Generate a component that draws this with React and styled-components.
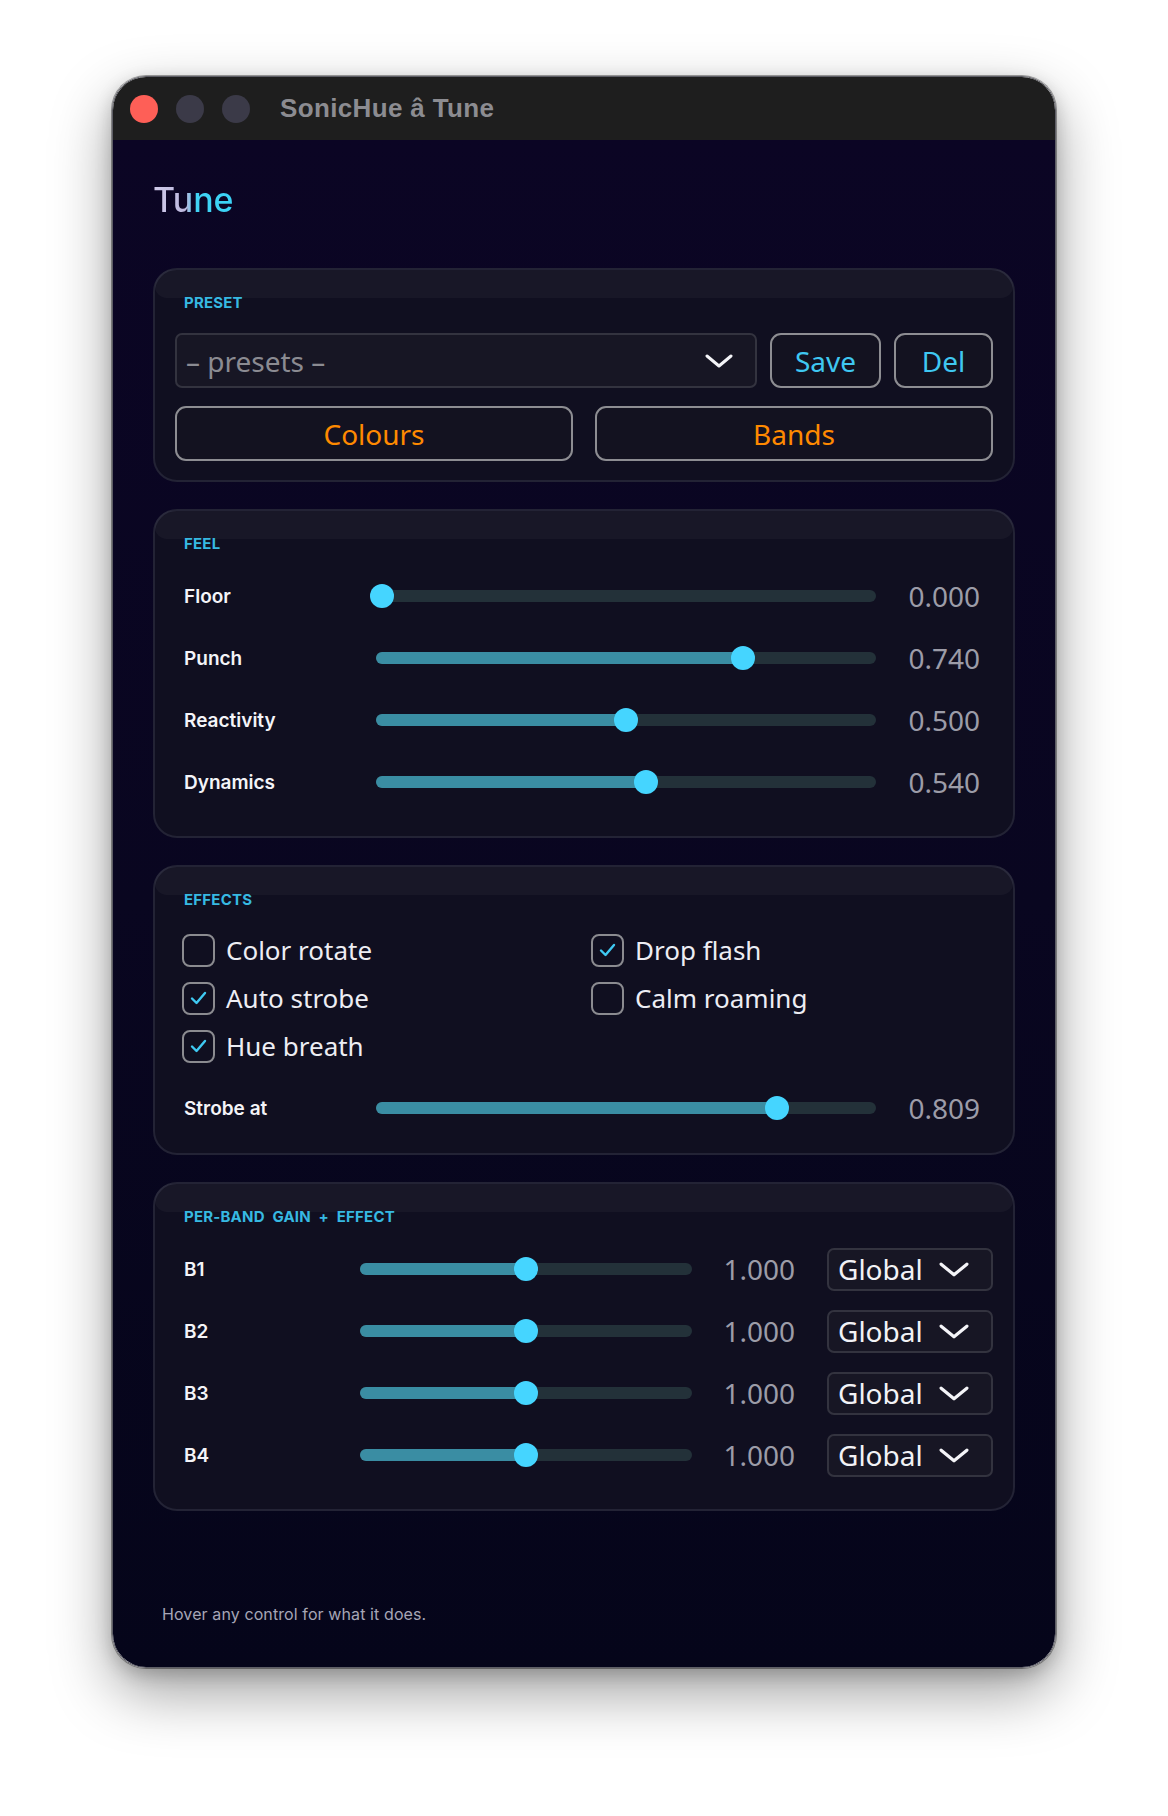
import React from 'react';
import styled, { createGlobalStyle } from 'styled-components';

const GlobalStyle = createGlobalStyle`
  html, body {
    margin: 0;
    padding: 0;
    background: #ffffff;
  }
  * {
    box-sizing: border-box;
  }
`;

const feel = [
  { name: 'Floor', value: 0 },
  { name: 'Punch', value: 0.74 },
  { name: 'Reactivity', value: 0.5 },
  { name: 'Dynamics', value: 0.54 },
];

const effects = [
  { name: 'Color rotate', on: false },
  { name: 'Drop flash', on: true },
  { name: 'Auto strobe', on: true },
  { name: 'Calm roaming', on: false },
  { name: 'Hue breath', on: true },
];

const bands = ['B1', 'B2', 'B3', 'B4'];

const Chevron = ({ w = 28, h = 14 }) => (
  <svg width={w} height={h} viewBox="0 0 28 14" fill="none">
    <polyline points="2,2 14,12 26,2" stroke="#f4f4f8" strokeWidth="3" strokeLinecap="round" strokeLinejoin="round" />
  </svg>
);

const Check = () => (
  <svg width="17" height="14" viewBox="0 0 17 14" fill="none">
    <polyline points="2,7.5 6.5,12 15,2" stroke="#3fc9f2" strokeWidth="2.4" strokeLinecap="round" strokeLinejoin="round" />
  </svg>
);

const Slider = ({ value }) => {
  const pos = `calc(6px + ${value} * (100% - 12px))`;
  return (
    <Track>
      <Fill style={{ width: pos }} />
      <Thumb style={{ left: pos }} />
    </Track>
  );
};

const App = () => {
  return (
    <>
      <GlobalStyle />
      <Page>
        <Window>
          <TitleBar>
            <Light $color="#fe5f57" />
            <Light $color="#3b3a48" />
            <Light $color="#3b3a48" />
            <Title>SonicHue â Tune</Title>
          </TitleBar>
          <Content>
            <Heading>Tune</Heading>

            <Panel>
              <SectionLabel>Preset</SectionLabel>
              <PresetRow>
                <Select $h={55}>
                  <SelectText $muted>– presets –</SelectText>
                  <Chevron />
                </Select>
                <OutlineButton $color="#3fc7f1" $w={111}>Save</OutlineButton>
                <OutlineButton $color="#3fc7f1" $w={99}>Del</OutlineButton>
              </PresetRow>
              <ButtonPair>
                <OutlineButton $color="#ff8a00">Colours</OutlineButton>
                <OutlineButton $color="#ff8a00">Bands</OutlineButton>
              </ButtonPair>
            </Panel>

            <Panel>
              <SectionLabel>Feel</SectionLabel>
              <SliderList $pad={13}>
                {feel.map((f) => (
                  <SliderRow key={f.name}>
                    <RowLabel>{f.name}</RowLabel>
                    <Slider value={f.value} />
                    <Value>{f.value.toFixed(3)}</Value>
                  </SliderRow>
                ))}
              </SliderList>
            </Panel>

            <Panel>
              <SectionLabel>Effects</SectionLabel>
              <CheckGrid>
                {effects.map((e) => (
                  <CheckItem key={e.name}>
                    <Box>{e.on && <Check />}</Box>
                    <CheckText>{e.name}</CheckText>
                  </CheckItem>
                ))}
              </CheckGrid>
              <SliderList $pad={4} $top={20}>
                <SliderRow>
                  <RowLabel>Strobe at</RowLabel>
                  <Slider value={0.809} />
                  <Value>0.809</Value>
                </SliderRow>
              </SliderList>
            </Panel>

            <Panel>
              <SectionLabel>Per-band gain + effect</SectionLabel>
              <SliderList $pad={13}>
                {bands.map((b) => (
                  <BandRow key={b}>
                    <RowLabel>{b}</RowLabel>
                    <Slider value={0.5} />
                    <BandValue>1.000</BandValue>
                    <Select $h={43}>
                      <SelectText>Global</SelectText>
                      <Chevron w={30} h={15} />
                    </Select>
                  </BandRow>
                ))}
              </SliderList>
            </Panel>

            <Footer>Hover any control for what it does.</Footer>
          </Content>
        </Window>
      </Page>
    </>
  );
};

const Page = styled.div`
  width: 1168px;
  height: 1816px;
  padding-top: 76px;
  display: flex;
  justify-content: center;
  align-items: flex-start;
  background: #ffffff;
`;

const Window = styled.div`
  width: 944px;
  height: 1592px;
  border-radius: 34px;
  border: 1px solid #5e5e66;
  overflow: hidden;
  display: flex;
  flex-direction: column;
  box-shadow: 0 0 0 1px rgba(0, 0, 0, 0.35), 0 24px 60px rgba(0, 0, 0, 0.38),
    0 6px 18px rgba(0, 0, 0, 0.2);
`;

const TitleBar = styled.div`
  height: 63px;
  flex: none;
  background: #1e1e1e;
  display: flex;
  align-items: center;
  padding-left: 17px;
  gap: 18px;
`;

const Light = styled.span`
  width: 28px;
  height: 28px;
  border-radius: 50%;
  background: ${(p) => p.$color};
`;

const Title = styled.div`
  margin-left: 12px;
  font-family: 'Liberation Sans', Arial, sans-serif;
  font-weight: 700;
  font-size: 26px;
  letter-spacing: 0.35px;
  color: #8c8c91;
`;

const Content = styled.div`
  flex: 1;
  display: flex;
  flex-direction: column;
  padding: 0 40px;
  background: linear-gradient(180deg, #0b0524 0%, #090620 50%, #05051a 100%);
`;

const Heading = styled.h1`
  margin: 40px 0 48px;
  font-family: Inter, sans-serif;
  font-weight: 500;
  font-size: 34px;
  line-height: 40px;
  align-self: flex-start;
  background: linear-gradient(90deg, #d0cbea 0%, #bdb8de 40%, #3fd3f5 54%, #3bd2f5 100%);
  -webkit-background-clip: text;
  background-clip: text;
  color: transparent;
`;

const Panel = styled.section`
  position: relative;
  border: 2px solid #232335;
  border-radius: 24px;
  background: #100f20;
  padding: 23px 20px 19px;
  margin-bottom: 27px;
  &::before {
    content: '';
    position: absolute;
    top: 0;
    left: 0;
    right: 0;
    height: 28px;
    border-radius: 22px 22px 16px 16px;
    background: rgba(255, 255, 255, 0.035);
  }
`;

const SectionLabel = styled.div`
  position: relative;
  padding-left: 9px;
  font-family: Inter, sans-serif;
  font-weight: 700;
  font-size: 15px;
  line-height: 20px;
  letter-spacing: 0.2px;
  word-spacing: 4px;
  text-transform: uppercase;
  color: #37b9e2;
  margin-bottom: 20px;
`;

const PresetRow = styled.div`
  display: flex;
  gap: 13px;
  margin-bottom: 18px;
`;

const ButtonPair = styled.div`
  display: grid;
  grid-template-columns: 1fr 1fr;
  gap: 22px;
`;

const Select = styled.div`
  flex: 1;
  height: ${(p) => p.$h}px;
  display: flex;
  align-items: center;
  justify-content: space-between;
  padding: 0 22px 0 9px;
  border: 2px solid #33333f;
  border-radius: 7px;
  background: #171624;
`;

const SelectText = styled.span`
  font-family: 'Noto Sans', sans-serif;
  font-size: 28px;
  color: ${(p) => (p.$muted ? '#8b8b92' : '#f2f2f6')};
`;

const OutlineButton = styled.div`
  width: ${(p) => (p.$w ? `${p.$w}px` : 'auto')};
  height: 55px;
  display: flex;
  align-items: center;
  justify-content: center;
  border: 2px solid #8d8d92;
  border-radius: 11px;
  background: #131220;
  font-family: 'Noto Sans', sans-serif;
  font-size: 28px;
  color: ${(p) => p.$color};
`;

const SliderList = styled.div`
  display: flex;
  flex-direction: column;
  gap: 18px;
  margin-top: ${(p) => p.$top || 0}px;
  padding-bottom: ${(p) => p.$pad || 0}px;
`;

const SliderRow = styled.div`
  height: 44px;
  display: grid;
  grid-template-columns: 192px 500px 1fr;
  align-items: center;
  padding-left: 9px;
`;

const BandRow = styled.div`
  height: 44px;
  display: grid;
  grid-template-columns: 176px 332px 103px 166px;
  align-items: center;
  padding-left: 9px;
  & > :last-child {
    margin-left: 32px;
    width: 166px;
  }
`;

const RowLabel = styled.div`
  font-family: Inter, sans-serif;
  font-weight: 600;
  font-size: 19px;
  color: #f4f4f8;
`;

const Track = styled.div`
  position: relative;
  height: 12px;
  border-radius: 6px;
  background: #233139;
`;

const Fill = styled.div`
  position: absolute;
  left: 0;
  top: 0;
  bottom: 0;
  border-radius: 6px;
  background: #3a8da3;
`;

const Thumb = styled.div`
  position: absolute;
  top: 50%;
  width: 24px;
  height: 24px;
  margin: -12px 0 0 -12px;
  border-radius: 50%;
  background: #45d5ff;
`;

const Value = styled.div`
  text-align: right;
  padding-right: 13px;
  font-family: 'Noto Sans', sans-serif;
  font-size: 28px;
  color: #9c9ca8;
`;

const BandValue = styled(Value)`
  padding-right: 0;
`;

const CheckGrid = styled.div`
  display: grid;
  grid-template-columns: 1fr 1fr;
  grid-auto-rows: 40px;
  row-gap: 8px;
`;

const CheckItem = styled.div`
  display: flex;
  align-items: center;
  gap: 11px;
  padding-left: 7px;
`;

const Box = styled.span`
  width: 33px;
  height: 33px;
  border: 2px solid #8b8b90;
  border-radius: 8px;
  display: flex;
  align-items: center;
  justify-content: center;
`;

const CheckText = styled.span`
  font-family: 'Noto Sans', sans-serif;
  font-size: 26px;
  color: #ededf3;
`;

const Footer = styled.div`
  margin-top: auto;
  padding: 0 0 43px 9px;
  font-family: Inter, sans-serif;
  font-size: 16px;
  line-height: 20px;
  letter-spacing: 0.1px;
  color: #a6a6b6;
`;

export default App;
